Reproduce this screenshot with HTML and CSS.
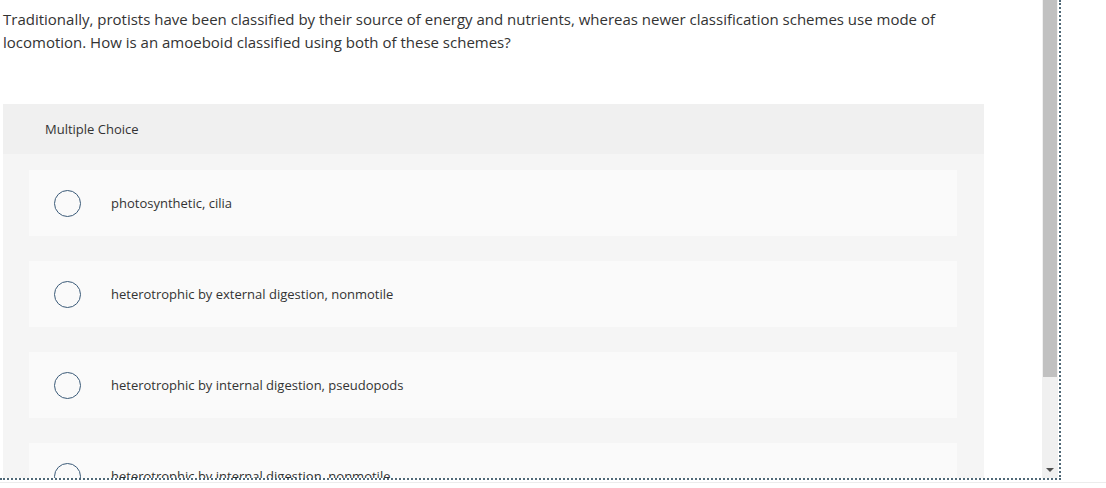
FILE: index.html
```html
<!DOCTYPE html>
<html>
<head>
<meta charset="utf-8">
<link rel="stylesheet" href="styles.css">
</head>
<body>
<div class="frame">
  <div class="content">
    <p class="question">Traditionally, protists have been classified by their source of energy and nutrients, whereas newer classification schemes use mode of locomotion. How is an amoeboid classified using both of these schemes?</p>
    <div class="panel">
      <div class="panel-head">Multiple Choice</div>
      <div class="panel-body">
        <div class="option"><span class="radio"></span><span class="label">photosynthetic, cilia</span></div>
        <div class="option"><span class="radio"></span><span class="label">heterotrophic by external digestion, nonmotile</span></div>
        <div class="option"><span class="radio"></span><span class="label">heterotrophic by internal digestion, pseudopods</span></div>
        <div class="option"><span class="radio"></span><span class="label">heterotrophic by internal digestion, nonmotile</span></div>
      </div>
    </div>
  </div>
  <div class="scrollbar">
    <div class="thumb"></div>
    <div class="track"></div>
    <div class="arrow"></div>
  </div>
</div>
<div class="underline"></div>
</body>
</html>
```
FILE: styles.css
```css
html, body {
  margin: 0;
  padding: 0;
  background: #ffffff;
}
body {
  font-family: "Open Sans", "Liberation Sans", sans-serif;
  color: #333333;
}
.frame {
  width: 1061px;
  height: 480px;
  box-sizing: border-box;
  display: flex;
  border-right: 2px dotted #4f6877;
  border-bottom: 2px dotted #4f6877;
}
.content {
  flex: 1;
  overflow: hidden;
  padding-left: 3px;
}
.question {
  margin: 0;
  padding-top: 8px;
  font-size: 15px;
  line-height: 23px;
  width: 981px;
}
.panel {
  margin-top: 50px;
  width: 981px;
  background: #f5f5f5;
}
.panel-head {
  height: 50px;
  display: flex;
  align-items: center;
  padding-left: 42px;
  background: #f0f0f0;
  font-size: 13px;
}
.panel-body {
  display: flex;
  flex-direction: column;
  gap: 25px;
  padding: 16px 27px 40px 26px;
}
.option {
  height: 66px;
  background: #fafafa;
  display: flex;
  align-items: center;
  padding-left: 25px;
  font-size: 13px;
}
.radio {
  width: 25px;
  height: 25px;
  border: 1.5px solid #3a5a78;
  border-radius: 50%;
  flex: none;
}
.label {
  margin-left: 30px;
}
.scrollbar {
  width: 16px;
  margin-right: 1px;
  display: flex;
  flex-direction: column;
  background: #f0f0f0;
}
.thumb {
  height: 377px;
  margin-left: 1px;
  width: 14px;
  background: #c1c1c1;
}
.track {
  flex: 1;
}
.arrow {
  height: 16px;
  display: flex;
  justify-content: center;
  align-items: center;
}
.arrow::before {
  content: "";
  border-left: 4px solid transparent;
  border-right: 4px solid transparent;
  border-top: 4px solid #505050;
}
.underline {
  margin-top: 2px;
  width: 1106px;
  height: 1px;
  background: #ececec;
}
```
